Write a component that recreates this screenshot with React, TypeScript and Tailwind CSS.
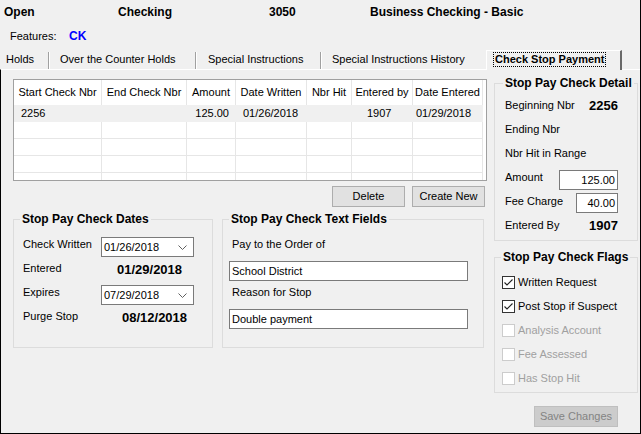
import React from 'react'

const cols = [
  { label: 'Start Check Nbr', w: 'w-[88px]' },
  { label: 'End Check Nbr', w: 'w-[85px]' },
  { label: 'Amount', w: 'w-[49px]' },
  { label: 'Date Written', w: 'w-[71px]' },
  { label: 'Nbr Hit', w: 'w-[45px]' },
  { label: 'Entered by', w: 'w-[61px]' },
  { label: 'Date Entered', w: 'w-[70px]' },
]

const Chevron = () => (
  <svg width="9" height="5" viewBox="0 0 9 5">
    <polyline points="0.5,0.5 4.5,4.5 8.5,0.5" fill="none" stroke="#606060" strokeWidth="1" />
  </svg>
)

const Group = ({ title, className, titleLeft, children }: { title: string; className: string; titleLeft: string; children: React.ReactNode }) => (
  <div className={`relative border border-[#dcdcdc] ${className}`}>
    <span className={`absolute -top-[9px] ${titleLeft} whitespace-nowrap bg-[#f0f0f0] px-[2px] text-[12px] font-bold leading-[16px]`}>
      {title}
    </span>
    {children}
  </div>
)

const DateBox = ({ value }: { value: string }) => (
  <div className="flex h-[20px] w-[93px] items-center justify-between border border-[#7a7a7a] bg-white pl-[2px] pr-[6px]">
    <span>{value}</span>
    <Chevron />
  </div>
)

const Flag = ({ label, checked, disabled }: { label: string; checked?: boolean; disabled?: boolean }) => (
  <div className="flex h-[24px] items-center pl-[7px]">
    <div className={`flex h-[13px] w-[13px] items-center justify-center border bg-white ${disabled ? 'border-[#cccccc]' : 'border-[#333333]'}`}>
      {checked && (
        <svg width="11" height="11" viewBox="0 0 11 11">
          <polyline points="1.5,5.5 4,8 9.5,2.5" fill="none" stroke="#222" strokeWidth="1.1" />
        </svg>
      )}
    </div>
    <span className={`ml-[3px] ${disabled ? 'text-[#a0a0a0]' : ''}`}>{label}</span>
  </div>
)

export default function App() {
  return (
    <div className="flex h-[434px] w-[641px] flex-col border-r border-black bg-[#f0f0f0] font-['Liberation_Sans',Arial,sans-serif] text-[11px] leading-[13px] text-black">
      {/* account header */}
      <div className="flex h-[25px] items-center pl-[4px] text-[12px] font-bold">
        <span className="w-[114px]">Open</span>
        <span className="w-[151px]">Checking</span>
        <span className="w-[101px]">3050</span>
        <span>Business Checking - Basic</span>
      </div>
      <div className="flex h-[22px] items-center pl-[10px]">
        <span className="w-[59px]">Features:</span>
        <span className="text-[12px] font-bold text-[#0000ff]">CK</span>
      </div>

      {/* tabs */}
      <div className="mt-[3px] flex h-[19px] items-end">
        <div className="h-[17px] w-[49px] border-r border-[#a0a0a0] pl-[6px] pt-[1px]">Holds</div>
        <div className="h-[17px] w-[147px] border-l border-r border-l-white border-r-[#a0a0a0] pl-[10px] pt-[1px]">Over the Counter Holds</div>
        <div className="h-[17px] w-[125px] border-l border-r border-l-white border-r-[#a0a0a0] pl-[11px] pt-[1px]">Special Instructions</div>
        <div className="h-[17px] w-[165px] border-l border-l-white pl-[10px] pt-[1px]">Special Instructions History</div>
        <div className="relative z-10 -mb-px h-[20px] w-[136px] border-l border-r-2 border-t border-l-white border-r-[#696969] border-t-white bg-[#f0f0f0] pl-[6px] pt-[1px]">
          <span className="inline-block border border-dotted border-black px-[1px] font-bold">Check Stop Payment</span>
        </div>
      </div>

      {/* tab page */}
      <div className="flex flex-1 items-start border-b border-l border-t border-black border-t-white">
        <div className="ml-[12px] mt-[9px] flex w-[474px] flex-col">
          <div className="h-[102px] overflow-hidden border border-[#a0a0a0] bg-white">
            <div className="flex h-[25px]">
              {cols.map((c) => (
                <div key={c.label} className={`${c.w} flex items-center justify-center border-r border-[#e6e6e6] whitespace-nowrap`}>
                  {c.label}
                </div>
              ))}
            </div>
            <div className="flex h-[17px] items-center">
              <div className="flex h-full w-[469px] items-center bg-[#f0f0f0]">
                <span className="w-[88px] pl-[7px]">2256</span>
                <span className="w-[85px]"></span>
                <span className="w-[49px] pr-[7px] text-right">125.00</span>
                <span className="w-[71px] pl-[7px]">01/26/2018</span>
                <span className="w-[45px]"></span>
                <span className="w-[61px] pl-[15px]">1907</span>
                <span className="w-[70px] pl-[3px]">01/29/2018</span>
              </div>
            </div>
            {[0, 1, 2, 3].map((r) => (
              <div key={r} className="flex h-[17px]">
                {cols.map((c) => (
                  <div key={c.label} className={`${c.w} border-b border-r border-[#e6e6e6]`} />
                ))}
              </div>
            ))}
          </div>

          <div className="mt-[5px] flex justify-end gap-[7px] pr-[2px]">
            <button className="h-[21px] w-[73px] border border-[#adadad] bg-[#e1e1e1]">Delete</button>
            <button className="h-[21px] w-[73px] border border-[#adadad] bg-[#e1e1e1]">Create New</button>
          </div>

          <div className="mt-[12px] flex gap-[9px]">
            <Group title="Stop Pay Check Dates" className="h-[129px] w-[200px] pl-[9px] pt-[17px]" titleLeft="left-[6px]">
              <div className="flex h-[24px] items-start">
                <span className="w-[78px] pt-[1px]">Check Written</span>
                <DateBox value="01/26/2018" />
              </div>
              <div className="flex h-[24px] items-start">
                <span className="w-[94px] pt-[1px]">Entered</span>
                <span className="pt-[1px] text-[13px] font-bold leading-[15px]">01/29/2018</span>
              </div>
              <div className="flex h-[24px] items-start">
                <span className="w-[78px] pt-[1px]">Expires</span>
                <DateBox value="07/29/2018" />
              </div>
              <div className="flex h-[24px] items-start">
                <span className="w-[99px] pt-[1px]">Purge Stop</span>
                <span className="pt-[1px] text-[13px] font-bold leading-[15px]">08/12/2018</span>
              </div>
            </Group>

            <Group title="Stop Pay Check Text Fields" className="h-[129px] w-[262px] pl-[6px] pt-[17px]" titleLeft="left-[6px]">
              <div className="h-[24px] pl-[3px] pt-[1px]">Pay to the Order of</div>
              <div className="h-[24px]">
                <div className="flex h-[20px] w-[239px] items-center border border-[#7a7a7a] bg-white pl-[2px]">School District</div>
              </div>
              <div className="h-[24px] pl-[3px] pt-[1px]">Reason for Stop</div>
              <div className="h-[24px]">
                <div className="flex h-[20px] w-[239px] items-center border border-[#7a7a7a] bg-white pl-[2px]">Double payment</div>
              </div>
            </Group>
          </div>
        </div>

        <div className="ml-[7px] mt-[13px] flex w-[144px] flex-col">
          <Group title="Stop Pay Check Detail" className="h-[158px] pl-[10px] pr-[19px] pt-[14px]" titleLeft="left-[8px]">
            <div className="flex h-[24px] items-start justify-between">
              <span className="pt-[1px]">Beginning Nbr</span>
              <span className="text-[13px] font-bold leading-[15px]">2256</span>
            </div>
            <div className="h-[24px] pt-[1px]">Ending Nbr</div>
            <div className="h-[24px] pt-[1px]">Nbr Hit in Range</div>
            <div className="flex h-[24px] items-start justify-between">
              <span className="pt-[1px]">Amount</span>
              <div className="flex h-[20px] w-[59px] items-center justify-end border border-[#7a7a7a] bg-white pr-[2px]">125.00</div>
            </div>
            <div className="flex h-[24px] items-start justify-between">
              <span className="pt-[1px]">Fee Charge</span>
              <div className="-mt-[1px] flex h-[20px] w-[42px] items-center justify-end border border-[#7a7a7a] bg-white pr-[2px]">40.00</div>
            </div>
            <div className="flex h-[24px] items-start justify-between">
              <span className="pt-[1px]">Entered By</span>
              <span className="text-[13px] font-bold leading-[15px]">1907</span>
            </div>
          </Group>

          <Group title="Stop Pay Check Flags" className="mt-[16px] h-[136px] pt-[12px]" titleLeft="left-[6px]">
            <Flag label="Written Request" checked />
            <Flag label="Post Stop if Suspect" checked />
            <Flag label="Analysis Account" disabled />
            <Flag label="Fee Assessed" disabled />
            <Flag label="Has Stop Hit" disabled />
          </Group>

          <button className="ml-[40px] mt-[13px] h-[21px] w-[84px] border border-[#bfbfbf] bg-[#cccccc] text-[#838383]">
            Save Changes
          </button>
        </div>
      </div>
    </div>
  )
}
